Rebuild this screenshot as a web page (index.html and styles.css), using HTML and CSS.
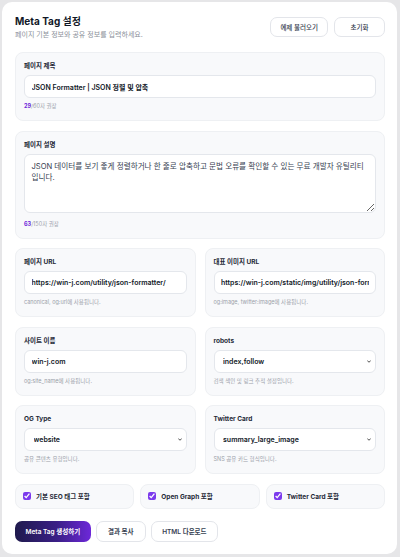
FILE: index.html
```html
<!DOCTYPE html>
<html lang="ko">
<head>
<meta charset="utf-8">
<title>Meta Tag 설정</title>
<link rel="stylesheet" href="styles.css">
</head>
<body>
<main class="card">
  <header class="head">
    <div class="head-text">
      <h1 class="title">Meta Tag 설정</h1>
      <p class="subtitle">페이지 기본 정보와 공유 정보를 입력하세요.</p>
    </div>
    <div class="head-actions">
      <button class="btn btn-ghost" type="button">예제 불러오기</button>
      <button class="btn btn-ghost" type="button">초기화</button>
    </div>
  </header>

  <div class="form">
    <section class="panel">
      <label class="label">페이지 제목</label>
      <input class="field" type="text" value="JSON Formatter | JSON 정렬 및 압축">
      <p class="hint"><b class="count">29</b>/60자 권장</p>
    </section>

    <section class="panel">
      <label class="label">페이지 설명</label>
      <textarea class="field area">JSON 데이터를 보기 좋게 정렬하거나 한 줄로 압축하고 문법 오류를 확인할 수 있는 무료 개발자 유틸리티입니다.</textarea>
      <p class="hint hint-area"><b class="count">63</b>/150자 권장</p>
    </section>

    <div class="row">
      <section class="panel">
        <label class="label">페이지 URL</label>
        <input class="field" type="text" value="https://win-j.com/utility/json-formatter/">
        <p class="hint">canonical, og:url에 사용됩니다.</p>
      </section>
      <section class="panel">
        <label class="label">대표 이미지 URL</label>
        <input class="field" type="text" value="https://win-j.com/static/img/utility/json-formatter.png">
        <p class="hint">og:image, twitter:image에 사용됩니다.</p>
      </section>
    </div>

    <div class="row">
      <section class="panel">
        <label class="label">사이트 이름</label>
        <input class="field" type="text" value="win-j.com">
        <p class="hint">og:site_name에 사용됩니다.</p>
      </section>
      <section class="panel">
        <label class="label">robots</label>
        <div class="select-wrap">
          <select class="field select"><option>index,follow</option></select>
          <svg class="chev" viewBox="0 0 8 5" aria-hidden="true"><path d="M1 1l3 3 3-3" fill="none" stroke="#222" stroke-width="1.6" stroke-linecap="round" stroke-linejoin="round"/></svg>
        </div>
        <p class="hint">검색 색인 및 링크 추적 설정입니다.</p>
      </section>
    </div>

    <div class="row">
      <section class="panel">
        <label class="label">OG Type</label>
        <div class="select-wrap">
          <select class="field select"><option>website</option></select>
          <svg class="chev" viewBox="0 0 8 5" aria-hidden="true"><path d="M1 1l3 3 3-3" fill="none" stroke="#222" stroke-width="1.6" stroke-linecap="round" stroke-linejoin="round"/></svg>
        </div>
        <p class="hint">공유 콘텐츠 유형입니다.</p>
      </section>
      <section class="panel">
        <label class="label">Twitter Card</label>
        <div class="select-wrap">
          <select class="field select"><option>summary_large_image</option></select>
          <svg class="chev" viewBox="0 0 8 5" aria-hidden="true"><path d="M1 1l3 3 3-3" fill="none" stroke="#222" stroke-width="1.6" stroke-linecap="round" stroke-linejoin="round"/></svg>
        </div>
        <p class="hint">SNS 공유 카드 형식입니다.</p>
      </section>
    </div>

    <div class="checks">
      <label class="check"><input type="checkbox" checked><span>기본 SEO 태그 포함</span></label>
      <label class="check"><input type="checkbox" checked><span>Open Graph 포함</span></label>
      <label class="check"><input type="checkbox" checked><span>Twitter Card 포함</span></label>
    </div>
  </div>

  <div class="actions">
    <button class="btn btn-primary" type="button">Meta Tag 생성하기</button>
    <button class="btn btn-sec" type="button">결과 복사</button>
    <button class="btn btn-sec" type="button">HTML 다운로드</button>
  </div>
</main>
</body>
</html>
```

FILE: styles.css
```css
* {
  box-sizing: border-box;
}

html,
body {
  margin: 0;
}

body {
  background: #e6e6e8;
  font-family: "Inter", "Noto Sans CJK KR", sans-serif;
  color: #1f2937;
  height: 557px;
  padding: 2px 3px 3px 2px;
  overflow: hidden;
}

.card {
  background: #ffffff;
  border-radius: 10px;
  height: 552px;
  padding: 14px 12px 0 13px;
}

.head {
  display: flex;
  justify-content: space-between;
  align-items: flex-start;
  margin-bottom: 13px;
}

.title {
  margin: 0;
  font-size: 10px;
  line-height: 11px;
  font-weight: 700;
  color: #111827;
}

.subtitle {
  margin: 3px 0 0;
  font-size: 7px;
  line-height: 9px;
  color: #8a8f99;
}

.head-actions {
  display: flex;
  gap: 6px;
  margin-top: 1px;
}

.btn {
  font-family: inherit;
  cursor: pointer;
  border-radius: 7px;
  white-space: nowrap;
}

.btn-ghost {
  height: 20px;
  min-width: 51px;
  padding: 0 9px;
  background: #ffffff;
  border: 1px solid #e3e5ea;
  color: #374151;
  font-size: 6.5px;
  font-weight: 500;
}

.form {
  display: flex;
  flex-direction: column;
  gap: 9.6px;
}

.panel {
  background: #f8f9fb;
  border: 1px solid #eef0f3;
  border-radius: 8px;
  padding: 9px 8px 10px;
  display: flex;
  flex-direction: column;
  min-width: 0;
}

.label {
  font-size: 6.5px;
  line-height: 8px;
  font-weight: 700;
  color: #1f2937;
  margin-bottom: 5px;
}

.field {
  display: block;
  width: 100%;
  height: 23px;
  margin: 0;
  border: 1px solid #e4e7ec;
  border-radius: 6px;
  background: #ffffff;
  padding: 0 6.5px;
  font-family: inherit;
  font-size: 7px;
  font-weight: 600;
  color: #111827;
  outline: none;
}

.area {
  height: 59px;
  padding: 6.5px 10px 6.5px 6.5px;
  font-size: 7.6px;
  line-height: 11px;
  font-weight: 400;
  color: #374151;
  resize: vertical;
}

.hint {
  margin: 5px 0 0;
  font-size: 5.5px;
  line-height: 7px;
  color: #9aa0a9;
}

.hint-area {
  margin-top: 8px;
}

.count {
  color: #6d28d9;
  font-weight: 700;
}

.row {
  display: grid;
  grid-template-columns: 1fr 1fr;
  gap: 9px;
}

.select-wrap {
  position: relative;
}

.select {
  appearance: none;
  -webkit-appearance: none;
  padding-left: 8.5px;
  padding-right: 14px;
}

.chev {
  position: absolute;
  right: 5px;
  top: 10px;
  width: 4px;
  height: 3px;
  pointer-events: none;
}

.checks {
  display: grid;
  grid-template-columns: repeat(3, 1fr);
  gap: 6px;
}

.check {
  height: 25px;
  background: #f8f9fb;
  border: 1px solid #eef0f3;
  border-radius: 8px;
  display: flex;
  align-items: center;
  gap: 5px;
  padding-left: 7px;
  font-size: 6.5px;
  font-weight: 700;
  color: #1f2937;
}

.check input {
  width: 8px;
  height: 8px;
  margin: 0;
  accent-color: #7c3aed;
}

.actions {
  display: flex;
  gap: 5px;
  margin-top: 12px;
}

.btn-primary {
  height: 21px;
  padding: 0 10.5px;
  border: 0;
  background: linear-gradient(90deg, #1f1a4d 0%, #3a1f86 55%, #6d28d9 100%);
  color: #ffffff;
  font-size: 6.5px;
  font-weight: 600;
}

.btn-sec {
  height: 21px;
  min-width: 50px;
  padding: 0 10.5px;
  background: #ffffff;
  border: 1px solid #e3e5ea;
  color: #374151;
  font-size: 6.5px;
  font-weight: 600;
}
```
